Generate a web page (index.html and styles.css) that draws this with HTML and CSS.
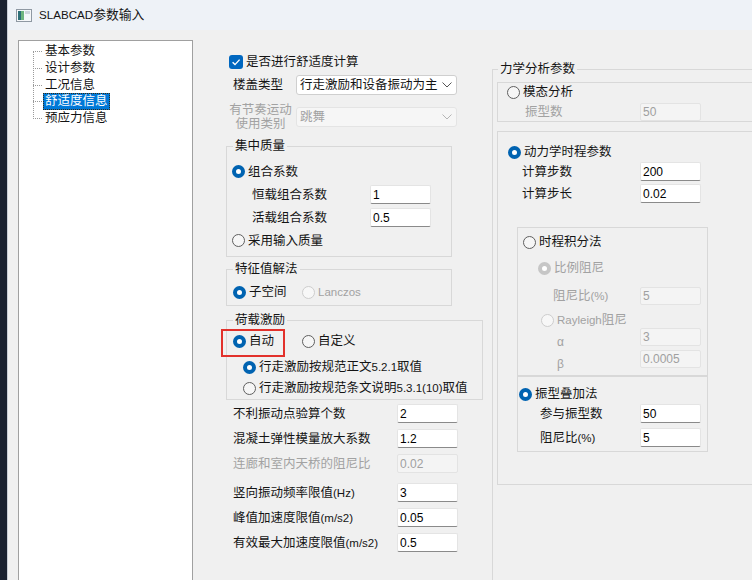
FILE: index.html
```html
<!DOCTYPE html>
<html lang="zh-CN">
<head>
    <meta charset="UTF-8">
    <title>SLABCAD参数输入</title>
    <link rel="stylesheet" href="styles.css">
</head>
<body>
    <div class="edge"></div>
    <div class="window">
        <div class="titlebar">
            <svg class="app-icon" viewBox="0 0 16 13">
                <rect x="0.5" y="0.5" width="15" height="12" fill="#f5f7f9" stroke="#8f99a3"/>
                <rect x="2" y="2" width="3" height="9" fill="#2d6f78"/>
                <rect x="5" y="2" width="3" height="9" fill="#6fb57e"/>
                <rect x="9" y="2" width="5" height="3" fill="#cfd6dd"/>
            </svg>
            <span class="title"><span class="title-lat">SLABCAD</span>参数输入</span>
        </div>
        <div class="client">
            <div class="tree">
                <ul>
                    <li>基本参数</li>
                    <li>设计参数</li>
                    <li>工况信息</li>
                    <li><span class="selected">舒适度信息</span></li>
                    <li>预应力信息</li>
                </ul>
            </div>

            <div class="col-left">
                <div class="row check-row">
                    <span class="checkbox"><svg viewBox="0 0 14 14"><path d="M3.6 7.3 L6 9.6 L10.6 4.6" fill="none" stroke="#fff" stroke-width="1.4"/></svg></span>
                    <span>是否进行舒适度计算</span>
                </div>
                <div class="row floor-row">
                    <span class="lbl-floor">楼盖类型</span>
                    <div class="select"><span>行走激励和设备振动为主</span><svg viewBox="0 0 10 6"><path d="M0.5 0.5 L5 5 L9.5 0.5" fill="none" stroke="#555"/></svg></div>
                </div>
                <div class="row rhythm-row">
                    <span class="lbl-rhythm off-text">有节奏运动<br>使用类别</span>
                    <div class="select disabled"><span>跳舞</span><svg viewBox="0 0 10 6"><path d="M0.5 0.5 L5 5 L9.5 0.5" fill="none" stroke="#b5b5b5"/></svg></div>
                </div>

                <fieldset class="group mass">
                    <legend>集中质量</legend>
                    <div class="grow"><span class="radio on"></span>组合系数</div>
                    <div class="grow sub"><span class="lbl">恒载组合系数</span><input class="field" value="1"></div>
                    <div class="grow sub"><span class="lbl">活载组合系数</span><input class="field" value="0.5"></div>
                    <div class="grow"><span class="radio off"></span>采用输入质量</div>
                </fieldset>

                <fieldset class="group eigen">
                    <legend>特征值解法</legend>
                    <div class="erow">
                        <span class="opt w69"><span class="radio on"></span>子空间</span>
                        <span class="opt off-text"><span class="radio dis-off"></span><span class="lat">Lanczos</span></span>
                    </div>
                </fieldset>

                <fieldset class="group load">
                    <legend>荷载激励</legend>
                    <div class="lrow first">
                        <span class="mark"></span>
                        <span class="opt w69"><span class="radio on"></span>自动</span>
                        <span class="opt"><span class="radio off"></span>自定义</span>
                    </div>
                    <div class="lrow second"><span class="radio on"></span>行走激励按规范正文<span class="lat">5.2.1</span>取值</div>
                    <div class="lrow third"><span class="radio off"></span>行走激励按规范条文说明<span class="lat">5.3.1(10)</span>取值</div>
                </fieldset>

                <div class="frow top"><span class="lbl">不利振动点验算个数</span><input class="field" value="2"></div>
                <div class="frow"><span class="lbl">混凝土弹性模量放大系数</span><input class="field" value="1.2"></div>
                <div class="frow"><span class="lbl off-text">连廊和室内天桥的阻尼比</span><input class="field" value="0.02" disabled></div>
                <div class="frow gap"><span class="lbl">竖向振动频率限值<span class="lat">(Hz)</span></span><input class="field" value="3"></div>
                <div class="frow"><span class="lbl">峰值加速度限值<span class="lat">(m/s2)</span></span><input class="field" value="0.05"></div>
                <div class="frow"><span class="lbl">有效最大加速度限值<span class="lat">(m/s2)</span></span><input class="field" value="0.5"></div>
            </div>

            <div class="col-right">
                <fieldset class="group mech">
                    <legend>力学分析参数</legend>
                    <div class="box modal">
                        <div class="rrow modal-radio"><span class="radio off"></span>模态分析</div>
                        <div class="rrow modal-count"><span class="lbl off-text">振型数</span><input class="field short" value="50" disabled></div>
                    </div>
                    <div class="box dyn">
                        <div class="rrow dyn-radio"><span class="radio on"></span>动力学时程参数</div>
                        <div class="rrow dyn-field steps"><span class="lbl">计算步数</span><input class="field" value="200"></div>
                        <div class="rrow dyn-field"><span class="lbl">计算步长</span><input class="field" value="0.02"></div>

                        <div class="box sub-box integ">
                            <div class="rrow integ-radio"><span class="radio off"></span>时程积分法</div>
                            <div class="rrow prop-radio off-text"><span class="radio dis-on"></span>比例阻尼</div>
                            <div class="rrow prop-field"><span class="lbl off-text">阻尼比<span class="lat">(%)</span></span><input class="field short" value="5" disabled></div>
                            <div class="rrow ray-radio off-text"><span class="radio dis-off"></span><span class="lat">Rayleigh</span>阻尼</div>
                            <div class="rrow greek-row alpha"><span class="lbl off-text"><span class="greek">α</span></span><input class="field short" value="3" disabled></div>
                            <div class="rrow greek-row beta"><span class="lbl off-text"><span class="greek">β</span></span><input class="field short" value="0.0005" disabled></div>
                        </div>
                        <div class="box sub-box modes">
                            <div class="rrow modes-radio"><span class="radio on"></span>振型叠加法</div>
                            <div class="rrow modes-field first"><span class="lbl">参与振型数</span><input class="field" value="50"></div>
                            <div class="rrow modes-field"><span class="lbl">阻尼比<span class="lat">(%)</span></span><input class="field" value="5"></div>
                        </div>
                    </div>
                </fieldset>
            </div>
        </div>
    </div>
</body>
</html>
```

FILE: styles.css
```css
* {
    box-sizing: border-box;
}
body {
    margin: 0;
    height: 580px;
    overflow: hidden;
    display: flex;
    background: #1b2230; /* desktop behind the dialog */
    font-family: "Liberation Sans", "Noto Sans CJK SC", sans-serif;
    font-size: 12.5px;
    line-height: 16px;
    color: #141414;
}
.edge {
    width: 7px;
    flex-shrink: 0;
}
.window {
    flex: 1;
    min-width: 0;
    overflow: hidden;
    background: #f0f0f0;
    border-left: 1px solid #c9ced6;
    display: flex;
    flex-direction: column;
}
.titlebar {
    height: 30px;
    flex-shrink: 0;
    background: #eef2f7;
    display: flex;
    align-items: center;
    padding-left: 8px;
}
.app-icon {
    width: 16px;
    height: 13px;
    margin-right: 7px;
}
.title {
    font-size: 12.8px;
}
.title-lat {
    font-size: 11.6px;
}
.client {
    flex: 1;
    min-height: 0;
    display: flex;
    align-items: flex-start;
    padding: 10px 0 0 10px;
}

/* tree on the left */
.tree {
    width: 175px;
    height: 540px;
    flex-shrink: 0;
    background: #fff;
    border: 1px solid #a0a0a0;
    border-bottom: none;
    padding-top: 2px;
}
.tree ul {
    list-style: none;
    margin: 0 0 0 14px;
    padding: 0;
    position: relative;
}
.tree ul::before {
    content: "";
    position: absolute;
    left: 0;
    top: 8px;
    bottom: 8px;
    border-left: 1px dotted #9a9a9a;
}
.tree li {
    position: relative;
    height: 16.75px;
    line-height: 16.75px;
    padding-left: 12px;
}
.tree li::before {
    content: "";
    position: absolute;
    left: 0;
    top: 8px;
    width: 9px;
    border-top: 1px dotted #9a9a9a;
}
.tree .selected {
    display: inline-block;
    margin-left: -2px;
    padding: 0 2px;
    background: #0078d7;
    color: #fff;
    outline: 1px dotted #3a2a10;
    outline-offset: -1px;
}

/* common controls */
.row {
    display: flex;
    align-items: center;
}
.off-text {
    color: #a2a2a2;
}
.lat {
    font-size: 11.5px;
}
.checkbox {
    width: 14px;
    height: 14px;
    border-radius: 3px;
    background: #0067c0;
    margin-right: 3px;
    display: flex;
}
.checkbox svg {
    width: 14px;
    height: 14px;
}
.radio {
    width: 13px;
    height: 13px;
    border-radius: 50%;
    flex-shrink: 0;
    margin-right: 3px;
}
.radio.on {
    border: 4px solid #0063b1;
    background: #fff;
}
.radio.off {
    border: 1px solid #5f5f5f;
    background: #f6f6f6;
}
.radio.dis-on {
    border: 4px solid #c6c6c6;
    background: #fff;
}
.radio.dis-off {
    border: 1px solid #cdcdcd;
    background: #f7f7f7;
}
.field {
    width: 61px;
    height: 19px;
    margin: 0;
    padding: 0 2px;
    border: 1px solid #e4e4e4;
    border-bottom-color: #8a8a8a;
    border-radius: 2px;
    background: #fff;
    font-family: "Liberation Sans", sans-serif;
    font-size: 12px;
    color: #000;
    outline: none;
}
.field.short {
    height: 18px;
}
.field:disabled {
    background: #f4f4f4;
    border-color: #e3e3e3;
    color: #a0a0a0;
}
.select {
    width: 161px;
    height: 20px;
    background: #fff;
    border: 1px solid #cfcfcf;
    border-radius: 3px;
    display: flex;
    align-items: center;
    justify-content: space-between;
    padding: 0 4px 0 3px;
}
.select svg {
    width: 10px;
    height: 6px;
}
.select.disabled {
    background: #f6f6f6;
    border-color: #e4e4e4;
    color: #a2a2a2;
}

/* left column */
.col-left {
    margin-left: 33px;
    width: 257px;
    flex-shrink: 0;
}
.check-row {
    margin-top: 14px;
    height: 16px;
    padding-left: 3px;
}
.floor-row {
    margin-top: 5px;
    height: 20px;
    padding-left: 7px;
}
.lbl-floor {
    width: 63px;
}
.rhythm-row {
    margin-top: 8px;
    height: 28px;
    padding-left: 3px;
}
.lbl-rhythm {
    width: 63px;
    line-height: 14px;
    text-align: center;
    margin-right: 4px;
}
.group {
    margin: 0;
    border: 1px solid #d8d8d8;
    min-width: 0;
}
.group legend {
    padding: 0 2px;
    line-height: 16px;
}
.mass {
    margin-top: 7px;
    width: 226px;
    padding: 6px 0 4px 5px;
}
.mass legend {
    margin-left: 1px;
}
.grow {
    display: flex;
    align-items: center;
    height: 23px;
}
.grow.sub {
    padding-left: 20px;
}
.grow .lbl {
    width: 118px;
}
.eigen {
    margin-top: 4px;
    width: 226px;
    padding: 5px 0 3px 6px;
}
.erow, .lrow {
    display: flex;
    align-items: center;
    height: 20px;
}
.opt {
    display: flex;
    align-items: center;
}
.opt.w69 {
    width: 69px;
}
.load {
    margin-top: 6px;
    width: 257px;
    padding: 3px 0 1px 6px;
}
.lrow.first {
    position: relative;
}
.lrow.second {
    margin-top: 6px;
    padding-left: 10px;
}
.lrow.third {
    margin-top: 1px;
    padding-left: 10px;
}
.mark {
    position: absolute;
    left: -12px;
    top: -2px;
    width: 64px;
    height: 28px;
    border: 2px solid #e2312b;
}
.frow {
    display: flex;
    align-items: center;
    height: 19px;
    margin-top: 6px;
    padding-left: 7px;
}
.frow.top {
    margin-top: 4px;
}
.frow.gap {
    margin-top: 10px;
}
.frow .lbl {
    width: 164px;
}

/* right column, cut by the window's right edge */
.col-right {
    margin-left: 9px;
    width: 260px;
    flex-shrink: 0;
}
.mech {
    margin-top: 21px;
    width: 260px;
    height: 519px;
    padding: 5px 0 0 4px;
    border-right: none;
    border-bottom: none;
}
.mech legend {
    margin-left: 1px;
}
.box {
    border: 1px solid #d8d8d8;
}
.modal, .dyn {
    width: 255px;
    border-right: none;
}
.rrow {
    display: flex;
    align-items: center;
}
.modal-radio {
    margin-top: 1px;
    height: 16px;
    padding-left: 9px;
}
.modal-count {
    margin-top: 3px;
    height: 18px;
    padding-left: 27px;
}
.modal-count .lbl {
    width: 115px;
}
.dyn {
    margin-top: 9px;
    padding: 12px 0 32px 0;
}
.dyn-radio {
    height: 16px;
    padding-left: 10px;
}
.dyn-field {
    height: 19px;
    margin-top: 3px;
    padding-left: 24px;
}
.dyn-field.steps {
    margin-top: 2px;
}
.dyn-field .lbl {
    width: 118px;
}
.sub-box {
    width: 191px;
    margin-left: 19px;
}
.integ {
    margin-top: 24px;
    padding: 6px 0 7px 0;
}
.integ-radio {
    height: 16px;
    padding-left: 5px;
}
.prop-radio {
    height: 16px;
    margin-top: 10px;
    padding-left: 20px;
}
.prop-field {
    height: 18px;
    margin-top: 11px;
    padding-left: 35px;
}
.prop-field .lbl {
    width: 87px;
}
.ray-radio {
    height: 16px;
    margin-top: 7px;
    padding-left: 23px;
}
.greek-row {
    height: 18px;
    padding-left: 39px;
}
.greek-row.beta {
    margin-top: 4px;
}
.greek-row .lbl {
    width: 83px;
}
.greek {
    display: inline-block;
    margin-top: 10px;
    font-size: 12px;
}
.modes {
    padding: 9px 0 4px 0;
}
.modes-radio {
    height: 16px;
    padding-left: 1px;
}
.modes-field {
    height: 19px;
    margin-top: 5px;
    padding-left: 22px;
}
.modes-field.first {
    margin-top: 2px;
}
.modes-field .lbl {
    width: 100px;
}
```
